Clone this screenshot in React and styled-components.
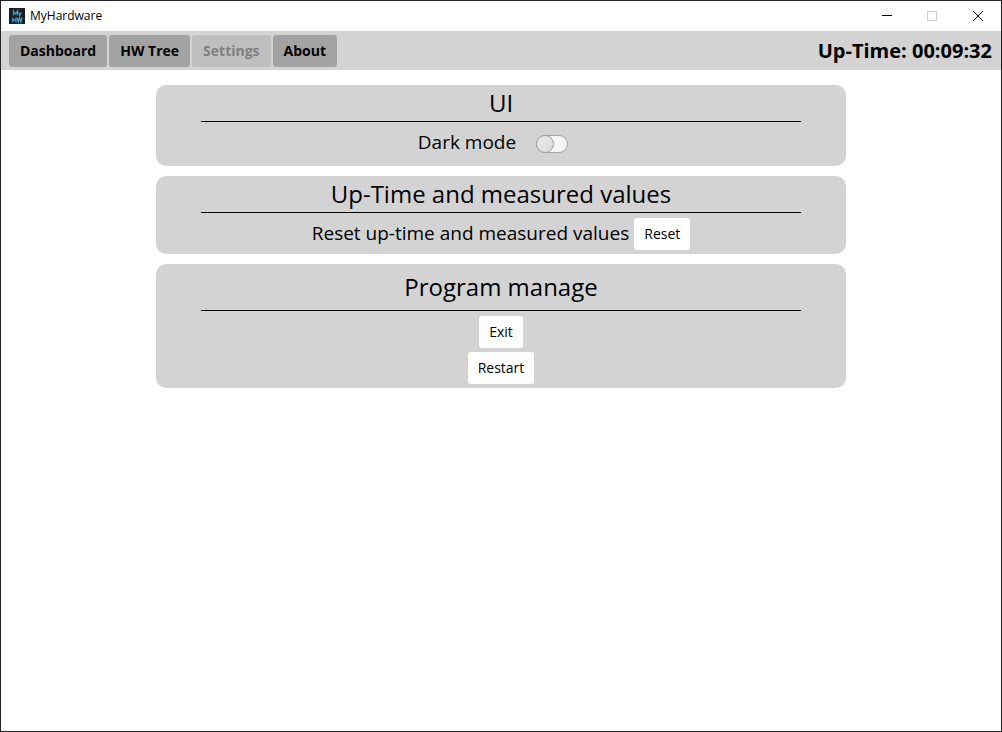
import React, { useState } from "react";
import styled, { createGlobalStyle } from "styled-components";

const GlobalStyle = createGlobalStyle`
  *, *::before, *::after { box-sizing: border-box; }
  body {
    margin: 0;
    background: #fff;
    color: #000;
    font-family: "Segoe UI", "Open Sans", "Noto Sans", sans-serif;
  }
`;

const Window = styled.div`
  display: flex;
  flex-direction: column;
  min-height: 100vh;
  border: 1px solid #232226;
  background: #fff;
`;

const TitleBar = styled.header`
  display: flex;
  align-items: center;
  height: 30px;
  padding-left: 8px;
`;

const AppName = styled.span`
  flex: 1;
  padding-left: 5px;
  font-size: 12px;
  line-height: 16px;
`;

const WindowButton = styled.button`
  display: flex;
  align-items: center;
  justify-content: center;
  width: 46px;
  height: 30px;
  padding: 0;
  border: 0;
  background: transparent;
  color: ${(p) => (p.disabled ? "#cccccc" : "#000")};
`;

const Toolbar = styled.nav`
  display: flex;
  align-items: center;
  gap: 2px;
  height: 39px;
  padding: 0 9px 0 8px;
  background: #d3d3d3;
`;

const Button = styled.button`
  height: 32px;
  padding: 0 10px;
  border: 0;
  border-radius: 3px;
  background: #fff;
  color: #000;
  font-family: inherit;
  font-size: 14px;
  line-height: 20px;
`;

const NavButton = styled(Button)`
  padding: 0 11px;
  background: #a3a3a3;
  font-weight: 700;

  &:disabled {
    background: #bfbfbf;
    color: #808080;
  }
`;

const UpTime = styled.div`
  margin-left: auto;
  font-size: 20px;
  font-weight: 700;
  line-height: 26px;
`;

const Content = styled.main`
  display: flex;
  flex-direction: column;
  align-items: center;
  gap: 10px;
  padding: 15px 0;
`;

const Card = styled.section`
  width: 69%;
  border-radius: 10px;
  background: #d3d3d3;
`;

const CardTitle = styled.h2`
  width: 87%;
  margin: 0 auto;
  padding: ${(p) => (p.$roomy ? "5px 0" : "0")};
  border-bottom: 1px solid #000;
  font-size: 24px;
  font-weight: 400;
  line-height: 36px;
  text-align: center;
`;

const Row = styled.div`
  display: flex;
  justify-content: center;
  gap: ${(p) => (p.$wide ? "20px" : "5px")};
  padding: ${(p) => (p.$wide ? "5px 16px 9px 0" : "5px 0 4px")};
  font-size: 19px;
  line-height: 30px;
`;

const Stack = styled.div`
  display: flex;
  flex-direction: column;
  align-items: center;
  gap: 4px;
  padding: 5px 0 4px;
`;

const Switch = styled.input`
  appearance: none;
  display: flex;
  width: 32px;
  height: 18px;
  margin: 8px 0 0;
  border: 1px solid #a6a6a6;
  border-radius: 9px;
  background: #f4f4f4;

  &::before {
    content: "";
    width: 18px;
    height: 18px;
    margin: -1px;
    border: 1px solid #a0a0a0;
    border-radius: 50%;
    background: linear-gradient(135deg, #eeeeee, #d8d8d8);
  }

  &:checked { justify-content: flex-end; }
`;

const AppIcon = () => (
  <svg width="16" height="16" viewBox="0 0 16 16" aria-hidden="true">
    <rect width="16" height="16" fill="#1e1e1e" />
    <g fill="none" stroke="#3d9bd0" strokeWidth="1.3">
      <path d="M4.5 7.5V3L6.5 6L8.5 3V7.5" />
      <path d="M9.5 4.2L10.9 7M12.3 4.2L10.3 8.4" />
      <path d="M3.7 9.5V14.5M7 9.5V14.5M3.7 12H7" />
      <path d="M8.3 9.5L9.3 14L10.6 10L11.9 14L13 9.5" />
    </g>
  </svg>
);

const MinimizeIcon = () => (
  <svg width="12" height="10" viewBox="0 0 12 10" stroke="currentColor">
    <path d="M2 4.5H12" />
  </svg>
);

const MaximizeIcon = () => (
  <svg width="10" height="10" viewBox="0 0 10 10" fill="none" stroke="currentColor">
    <rect x="0.5" y="0.5" width="9" height="9" />
  </svg>
);

const CloseIcon = () => (
  <svg width="10" height="10" viewBox="0 0 10 10" stroke="currentColor">
    <path d="M0 0L10 10M10 0L0 10" />
  </svg>
);

export default function App() {
  const [dark, setDark] = useState(false);
  return (
    <>
      <GlobalStyle />
      <Window>
        <TitleBar>
          <AppIcon />
          <AppName>MyHardware</AppName>
          <WindowButton aria-label="Minimize"><MinimizeIcon /></WindowButton>
          <WindowButton aria-label="Maximize" disabled><MaximizeIcon /></WindowButton>
          <WindowButton aria-label="Close"><CloseIcon /></WindowButton>
        </TitleBar>
        <Toolbar>
          <NavButton>Dashboard</NavButton>
          <NavButton>HW Tree</NavButton>
          <NavButton disabled>Settings</NavButton>
          <NavButton>About</NavButton>
          <UpTime>Up-Time: 00:09:32</UpTime>
        </Toolbar>
        <Content>
          <Card>
            <CardTitle>UI</CardTitle>
            <Row $wide>
              <label htmlFor="dark-mode">Dark mode</label>
              <Switch
                id="dark-mode"
                type="checkbox"
                role="switch"
                checked={dark}
                onChange={(e) => setDark(e.target.checked)}
              />
            </Row>
          </Card>
          <Card>
            <CardTitle>Up-Time and measured values</CardTitle>
            <Row>
              <span>Reset up-time and measured values</span>
              <Button>Reset</Button>
            </Row>
          </Card>
          <Card>
            <CardTitle $roomy>Program manage</CardTitle>
            <Stack>
              <Button>Exit</Button>
              <Button>Restart</Button>
            </Stack>
          </Card>
        </Content>
      </Window>
    </>
  );
}
